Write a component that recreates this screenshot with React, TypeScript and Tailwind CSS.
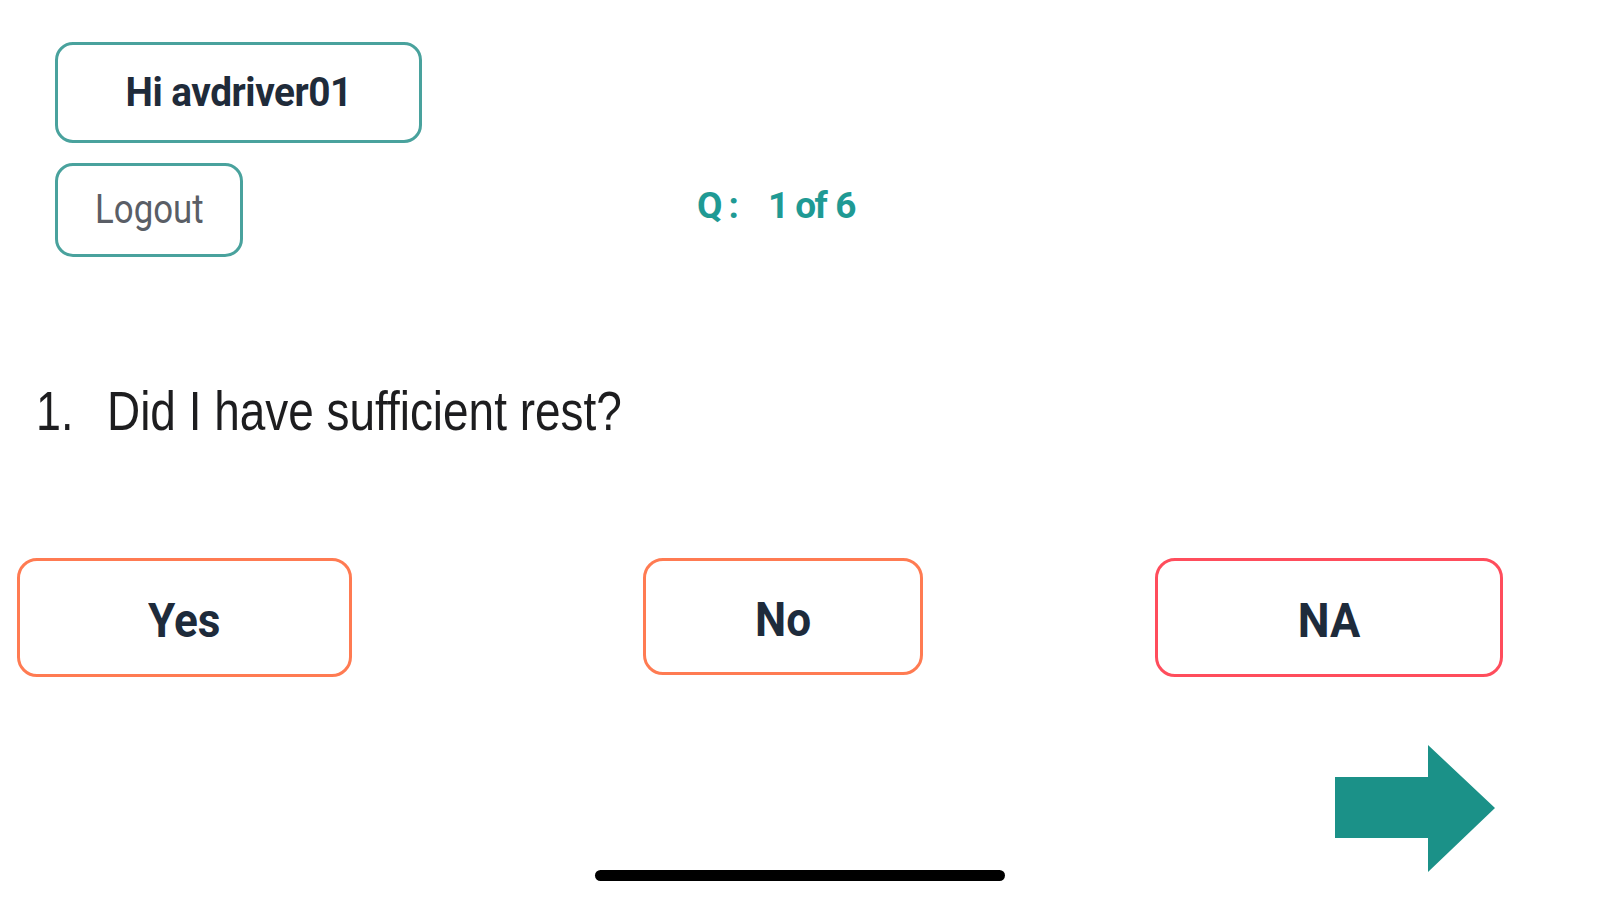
import React from "react";

export default function App() {
  return (
    <div className="relative w-[1599px] h-[900px] bg-white overflow-hidden font-['Roboto',sans-serif]">
      <div className="pt-[42px] pl-[55px]">
        <div className="w-[367px] h-[101px] border-[3px] border-[#49a29d] rounded-[18px] flex items-center justify-center">
          <span className="inline-block scale-x-[0.97] text-[40px] leading-none font-bold text-[#1f2b3a] tracking-[-0.5px]">
            Hi avdriver01
          </span>
        </div>
        <div className="mt-[20px] flex items-center">
          <div className="w-[188px] h-[94px] border-[3px] border-[#49a29d] rounded-[18px] flex items-center justify-center">
            <span className="inline-block scale-x-[0.87] text-[40px] leading-none text-[#5a5e66]">
              Logout
            </span>
          </div>
          <div className="ml-[454px] -mt-[10px] flex items-baseline text-[37px] leading-none font-bold text-[#1f9a94]">
            <span>Q</span>
            <span className="ml-[6px]">:</span>
            <span className="ml-[29px]">1</span>
            <span className="ml-[6px] tracking-[-1.5px]">of</span>
            <span className="ml-[9px]">6</span>
          </div>
        </div>
      </div>

      <div className="mt-[126px] flex items-baseline font-['Liberation_Sans',sans-serif] text-[56px] leading-[56px] text-[#1d1d1f]">
        <span className="inline-block origin-left scale-x-[0.8] ml-[36px]">1.</span>
        <span className="inline-block origin-left scale-x-[0.82] ml-[24px] whitespace-nowrap">
          Did I have sufficient rest?
        </span>
      </div>

      <div className="mt-[119px] flex items-start pl-[17px]">
        <div className="w-[335px] h-[119px] border-[3px] border-[#ff7b52] rounded-[20px] flex items-center justify-center pt-[5px]">
          <span className="inline-block scale-x-[0.9] text-[49px] leading-none font-bold text-[#1e2b3b]">Yes</span>
        </div>
        <div className="ml-[291px] w-[280px] h-[117px] border-[3px] border-[#ff7b52] rounded-[20px] flex items-center justify-center pt-[5px]">
          <span className="inline-block scale-x-[0.9] text-[49px] leading-none font-bold text-[#1e2b3b]">No</span>
        </div>
        <div className="ml-[232px] w-[348px] h-[119px] border-[3px] border-[#ff4d5c] rounded-[20px] flex items-center justify-center pt-[5px]">
          <span className="inline-block scale-x-[0.92] text-[49px] leading-none font-bold text-[#1e2b3b]">NA</span>
        </div>
      </div>

      <div className="mt-[68px] flex justify-end pr-[104px]">
        <svg width="160" height="127" viewBox="0 0 160 127">
          <polygon points="0,32 93,32 93,0 160,63 93,127 93,93 0,93" fill="#1b9188" />
        </svg>
      </div>

      <div className="absolute left-[595px] top-[870px] w-[410px] h-[11px] rounded-full bg-black" />
    </div>
  );
}
